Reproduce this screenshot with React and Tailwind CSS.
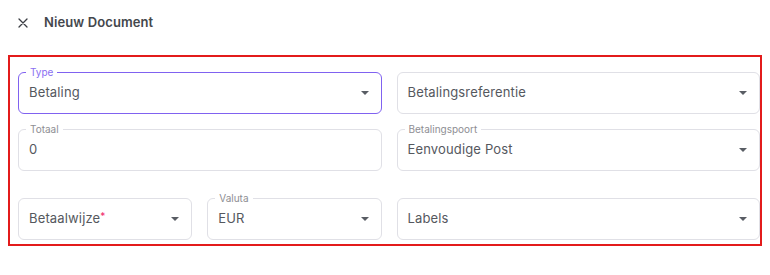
import React from 'react';

const Caret = () => (
  <svg width="8" height="4" viewBox="0 0 8 4" className="shrink-0">
    <path d="M0 0 H8 L4 4 Z" fill="#595d64" />
  </svg>
);

const Field = ({ label, value, required, select = true, focused = false, className = '' }) => {
  return (
    <div
      className={`relative h-[42px] rounded-[6px] border flex items-center pl-[10px] pr-[12px] ${
        focused ? 'border-[#8062f0]' : 'border-[#e0e0e6]'
      } ${className}`}
    >
      {label && (
        <span
          className={`absolute -top-[7px] left-[7px] bg-white px-[4px] text-[10px] leading-[12px] ${
            focused ? 'text-[#8a6ff2]' : 'text-[#8e8e93]'
          }`}
        >
          {label}
        </span>
      )}
      <span className="flex-1 text-[13px] text-[#55585e] tracking-[0.15px]">
        {value}
        {required && <span className="text-[#f0286a] text-[10px] align-top">*</span>}
      </span>
      {select && <Caret />}
    </div>
  );
};

export default function App() {
  return (
    <div
      className="w-[770px] h-[275px] bg-white"
      style={{ fontFamily: '"Inter", "Noto Sans", sans-serif' }}
    >
      <div className="flex items-center h-[44px] pl-[18px] pt-[2px]">
        <svg width="10" height="10" viewBox="0 0 10 10" className="mr-[16px]">
          <path d="M1 1 L9 9 M9 1 L1 9" stroke="#3b3e44" strokeWidth="1.3" strokeLinecap="round" />
        </svg>
        <span className="text-[13px] font-semibold text-[#44474c] tracking-[0.1px]">Nieuw Document</span>
      </div>

      <div className="mt-[11px] ml-[8px] w-[754px] border-2 border-[#e31b1b] pt-[15px] pl-[8px] pb-[4px]">
        <div className="grid grid-cols-2 gap-x-[15px]">
          <div className="flex flex-col">
            <Field label="Type" value="Betaling" focused />
            <Field label="Totaal" value="0" select={false} className="mt-[15px]" />
            <div className="mt-[27px] grid grid-cols-2 gap-x-[15px]">
              <Field value="Betaalwijze" required />
              <Field label="Valuta" value="EUR" />
            </div>
          </div>
          <div className="flex flex-col">
            <Field value="Betalingsreferentie" />
            <Field label="Betalingspoort" value="Eenvoudige Post" className="mt-[15px]" />
            <Field value="Labels" className="mt-[27px]" />
          </div>
        </div>
      </div>
    </div>
  );
}
